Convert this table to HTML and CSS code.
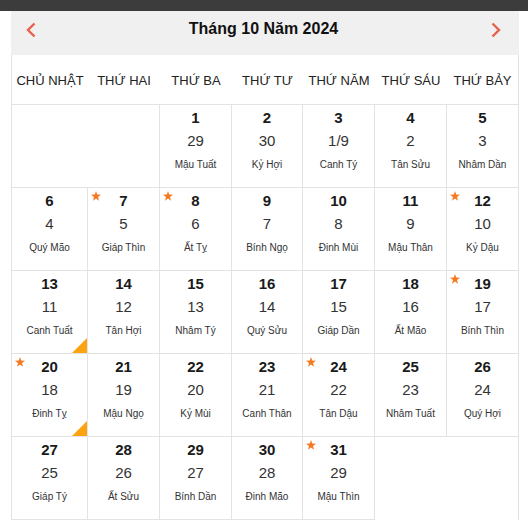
FILE: index.html
```html
<!DOCTYPE html>
<html lang="vi">
<head>
<meta charset="utf-8">
<title>Lịch tháng 10 năm 2024</title>
<link rel="stylesheet" href="styles.css">
</head>
<body>
<div class="topbar"></div>
<div class="cal">
  <div class="head">
    <a class="nav" href="#" aria-label="Tháng trước"><svg width="10" height="16" viewBox="0 0 10 16"><polyline points="8.5,1.5 2,8 8.5,14.5" fill="none" stroke="#e8604c" stroke-width="2.4"/></svg></a>
    <div class="title">Tháng 10 Năm 2024</div>
    <a class="nav" href="#" aria-label="Tháng sau"><svg width="10" height="16" viewBox="0 0 10 16"><polyline points="1.5,1.5 8,8 1.5,14.5" fill="none" stroke="#e8604c" stroke-width="2.4"/></svg></a>
  </div>
  <div class="dow">
    <div>CHỦ NHẬT</div><div>THỨ HAI</div><div>THỨ BA</div><div>THỨ TƯ</div><div>THỨ NĂM</div><div>THỨ SÁU</div><div>THỨ BẢY</div>
  </div>
  <div class="grid">
    <div class="cell lead"></div>
    <div class="cell lead edge"></div>
    <div class="cell day"><b>1</b><span class="lunar">29</span><span class="cc">Mậu Tuất</span></div>
    <div class="cell day"><b>2</b><span class="lunar">30</span><span class="cc">Kỷ Hợi</span></div>
    <div class="cell day"><b>3</b><span class="lunar">1/9</span><span class="cc">Canh Tý</span></div>
    <div class="cell day"><b>4</b><span class="lunar">2</span><span class="cc">Tân Sửu</span></div>
    <div class="cell day"><b>5</b><span class="lunar">3</span><span class="cc">Nhâm Dần</span></div>

    <div class="cell day"><b>6</b><span class="lunar">4</span><span class="cc">Quý Mão</span></div>
    <div class="cell day star"><b>7</b><span class="lunar">5</span><span class="cc">Giáp Thìn</span></div>
    <div class="cell day star"><b>8</b><span class="lunar">6</span><span class="cc">Ất Tỵ</span></div>
    <div class="cell day"><b>9</b><span class="lunar">7</span><span class="cc">Bính Ngọ</span></div>
    <div class="cell day"><b>10</b><span class="lunar">8</span><span class="cc">Đinh Mùi</span></div>
    <div class="cell day"><b>11</b><span class="lunar">9</span><span class="cc">Mậu Thân</span></div>
    <div class="cell day star"><b>12</b><span class="lunar">10</span><span class="cc">Kỷ Dậu</span></div>

    <div class="cell day corner"><b>13</b><span class="lunar">11</span><span class="cc">Canh Tuất</span></div>
    <div class="cell day"><b>14</b><span class="lunar">12</span><span class="cc">Tân Hợi</span></div>
    <div class="cell day"><b>15</b><span class="lunar">13</span><span class="cc">Nhâm Tý</span></div>
    <div class="cell day"><b>16</b><span class="lunar">14</span><span class="cc">Quý Sửu</span></div>
    <div class="cell day"><b>17</b><span class="lunar">15</span><span class="cc">Giáp Dần</span></div>
    <div class="cell day"><b>18</b><span class="lunar">16</span><span class="cc">Ất Mão</span></div>
    <div class="cell day star"><b>19</b><span class="lunar">17</span><span class="cc">Bính Thìn</span></div>

    <div class="cell day star corner"><b>20</b><span class="lunar">18</span><span class="cc">Đinh Tỵ</span></div>
    <div class="cell day"><b>21</b><span class="lunar">19</span><span class="cc">Mậu Ngọ</span></div>
    <div class="cell day"><b>22</b><span class="lunar">20</span><span class="cc">Kỷ Mùi</span></div>
    <div class="cell day"><b>23</b><span class="lunar">21</span><span class="cc">Canh Thân</span></div>
    <div class="cell day star"><b>24</b><span class="lunar">22</span><span class="cc">Tân Dậu</span></div>
    <div class="cell day"><b>25</b><span class="lunar">23</span><span class="cc">Nhâm Tuất</span></div>
    <div class="cell day"><b>26</b><span class="lunar">24</span><span class="cc">Quý Hợi</span></div>

    <div class="cell day"><b>27</b><span class="lunar">25</span><span class="cc">Giáp Tý</span></div>
    <div class="cell day"><b>28</b><span class="lunar">26</span><span class="cc">Ất Sửu</span></div>
    <div class="cell day"><b>29</b><span class="lunar">27</span><span class="cc">Bính Dần</span></div>
    <div class="cell day"><b>30</b><span class="lunar">28</span><span class="cc">Đinh Mão</span></div>
    <div class="cell day star"><b>31</b><span class="lunar">29</span><span class="cc">Mậu Thìn</span></div>
    <div class="cell"></div>
    <div class="cell"></div>
  </div>
</div>
</body>
</html>
```
FILE: styles.css
```css
* { box-sizing: border-box; }
html, body { margin: 0; padding: 0; background: #fff; }
body {
  font-family: "Liberation Sans", Arial, sans-serif;
  color: #222;
  overflow: hidden;
}
.topbar { height: 11px; background: #3c3c3c; }
.cal {
  margin-left: 11px;
  width: 508px;
}
.head {
  height: 44px;
  background: #f0f0f0;
  display: flex;
  align-items: flex-start;
  justify-content: space-between;
  padding: 9px 18px 0 15px;
}
.nav { display: flex; width: 10px; height: 16px; margin-top: 2px; }
.title {
  font-size: 16px;
  font-weight: bold;
  line-height: 18px;
  color: #111;
}
.dow, .grid {
  display: grid;
  grid-template-columns: 76px 72px 72px 71px 72px 72px 71px;
  border-left: 1px solid #e3e3e3;
  border-right: 1px solid #e3e3e3;
}
.dow {
  height: 50px;
  border-bottom: 1px solid #e3e3e3;
  align-items: center;
  font-size: 13px;
  text-align: center;
  padding-top: 1px;
}
.dow div { white-space: nowrap; }
.grid { grid-auto-rows: 83px; }
.cell { position: relative; }
.lead { border-bottom: 1px solid #e3e3e3; }
.edge { border-right: 1px solid #e3e3e3; }
.day {
  display: flex;
  flex-direction: column;
  align-items: center;
  padding-top: 4px;
  border-right: 1px solid #e3e3e3;
  border-bottom: 1px solid #e3e3e3;
}
.day:nth-child(7n) { border-right: 0; }
.day b {
  font-size: 15px;
  line-height: 18px;
  color: #1a1a1a;
}
.lunar {
  font-size: 15px;
  line-height: 28px;
  color: #333;
}
.cc {
  font-size: 10px;
  line-height: 20px;
  color: #333;
  white-space: nowrap;
}
.star::before {
  content: "";
  position: absolute;
  left: 3px;
  top: 3px;
  width: 10px;
  height: 10px;
  background: #f47920;
  clip-path: polygon(50% 0%, 62% 36%, 100% 38%, 70% 60%, 80% 98%, 50% 76%, 20% 98%, 30% 60%, 0% 38%, 38% 36%);
}
.corner::after {
  content: "";
  position: absolute;
  right: 0;
  bottom: 0;
  width: 15px;
  height: 15px;
  background: #fca311;
  clip-path: polygon(100% 0, 100% 100%, 0 100%);
}
```
